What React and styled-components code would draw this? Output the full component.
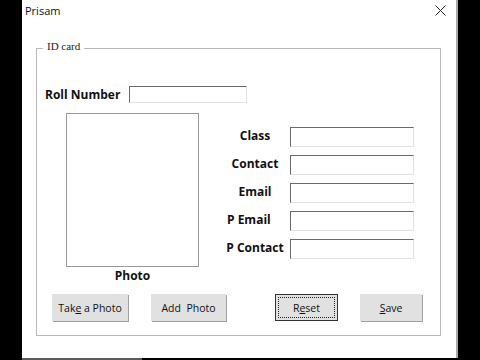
import React from "react";
import styled, { createGlobalStyle } from "styled-components";

const Global = createGlobalStyle`
  html, body { margin: 0; padding: 0; background: #000; }
  body { width: 480px; height: 360px; overflow: hidden; font-family: "Open Sans", "Noto Sans", sans-serif; }
`;

const Screen = styled.div`
  width: 480px;
  height: 360px;
  background: #000;
  display: flex;
  flex-direction: column;
`;

const Window = styled.div`
  margin-left: 22px;
  width: 434px;
  height: 358px;
  background: #fff;
  border-right: 2px solid #a9a9a9;
  display: flex;
  flex-direction: column;
`;

const Taskbar = styled.div`
  margin-left: 22px;
  width: 120px;
  height: 2px;
  background: #5a5a5a;
`;

const TitleBar = styled.div`
  height: 30px;
  display: flex;
  align-items: flex-start;
  justify-content: space-between;
`;

const Title = styled.span`
  margin: 3px 0 0 3px;
  font-family: "Open Sans", sans-serif;
  font-size: 11px;
  color: #111;
`;

const Close = styled.svg`
  margin: 5px 10px 0 0;
`;

const Group = styled.div`
  position: relative;
  margin: 18px 0 0 14px;
  width: 403px;
  height: 286px;
  border: 1px solid #b9b9b9;
  display: flex;
  flex-direction: column;
`;

const Legend = styled.span`
  position: absolute;
  top: -9px;
  left: 6px;
  padding: 0 4px;
  background: #fff;
  font-family: "Liberation Serif", serif;
  font-size: 11px;
  color: #222;
`;

const RollRow = styled.div`
  margin: 37px 0 0 8px;
  display: flex;
  align-items: center;
  gap: 9px;
  height: 17px;
`;

const Label = styled.span`
  font-family: "Open Sans", sans-serif;
  font-weight: 700;
  font-size: 12px;
  color: #111;
  white-space: nowrap;
`;

const Input = styled.div`
  box-sizing: border-box;
  width: ${(p) => p.w}px;
  height: ${(p) => p.h}px;
  border-top: 1px solid #6a6a6a;
  border-left: 1px solid #6a6a6a;
  border-right: 1px solid #e3e3e3;
  border-bottom: 1px solid #e3e3e3;
  background: #fff;
`;

const Middle = styled.div`
  margin-top: 10px;
  display: flex;
  align-items: flex-start;
`;

const PhotoCol = styled.div`
  margin-left: 29px;
  width: 133px;
  display: flex;
  flex-direction: column;
  align-items: center;
`;

const PhotoBox = styled.div`
  box-sizing: border-box;
  width: 133px;
  height: 154px;
  border: 1px solid #9a9a9a;
`;

const PhotoLabel = styled(Label)`
  margin-top: 0px;
  line-height: 17px;
`;

const Form = styled.div`
  margin: 14px 0 0 26px;
  display: grid;
  grid-template-columns: 60px 124px;
  column-gap: 5px;
  row-gap: 8px;
`;

const FieldLabel = styled(Label)`
  line-height: 20px;
  height: 20px;
  text-align: ${(p) => (p.left ? "left" : "center")};
  padding-left: ${(p) => (p.left ? 2 : 0)}px;
  position: relative;
  top: -1px;
`;

const Buttons = styled.div`
  margin: 10px 0 0 15px;
  display: flex;
  align-items: flex-start;
`;

const Button = styled.div`
  box-sizing: border-box;
  margin-left: ${(p) => p.gap || 0}px;
  width: ${(p) => p.w}px;
  height: 27px;
  background: #e1e1e1;
  border: 1px solid ${(p) => (p.focus ? "#333" : "#e1e1e1")};
  box-shadow: ${(p) => (p.focus ? "none" : "1px 1px 0 #a0a0a0")};
  display: flex;
  align-items: center;
  justify-content: center;
  font-family: "Open Sans", sans-serif;
  font-size: 10.5px;
  color: #111;
  white-space: pre;
  position: relative;
`;

const FocusRing = styled.span`
  position: absolute;
  inset: 2px;
  border: 1px dotted #222;
`;

const U = styled.span`
  text-decoration: underline;
`;

export default function App() {
  const fields = [
    { t: "Class" },
    { t: "Contact" },
    { t: "Email" },
    { t: "P Email", left: true },
    { t: "P Contact" },
  ];
  return (
    <Screen>
      <Global />
      <Window>
        <TitleBar>
          <Title>Prisam</Title>
          <Close width="11" height="11" viewBox="0 0 11 11">
            <path d="M0.5 0.5 L10.5 10.5 M10.5 0.5 L0.5 10.5" stroke="#222" strokeWidth="1" fill="none" />
          </Close>
        </TitleBar>
        <Group>
          <Legend>ID card</Legend>
          <RollRow>
            <Label>Roll Number</Label>
            <Input w={118} h={17} />
          </RollRow>
          <Middle>
            <PhotoCol>
              <PhotoBox />
              <PhotoLabel>Photo</PhotoLabel>
            </PhotoCol>
            <Form>
              {fields.map((f) => (
                <React.Fragment key={f.t}>
                  <FieldLabel left={f.left}>{f.t}</FieldLabel>
                  <Input w={124} h={20} />
                </React.Fragment>
              ))}
            </Form>
          </Middle>
          <Buttons>
            <Button w={76}>Tak<U>e</U> a Photo</Button>
            <Button w={75} gap={23}>Add  Photo</Button>
            <Button w={63} gap={49} focus>
              <FocusRing />R<U>e</U>set
            </Button>
            <Button w={62} gap={22}><U>S</U>ave</Button>
          </Buttons>
        </Group>
      </Window>
      <Taskbar />
    </Screen>
  );
}
